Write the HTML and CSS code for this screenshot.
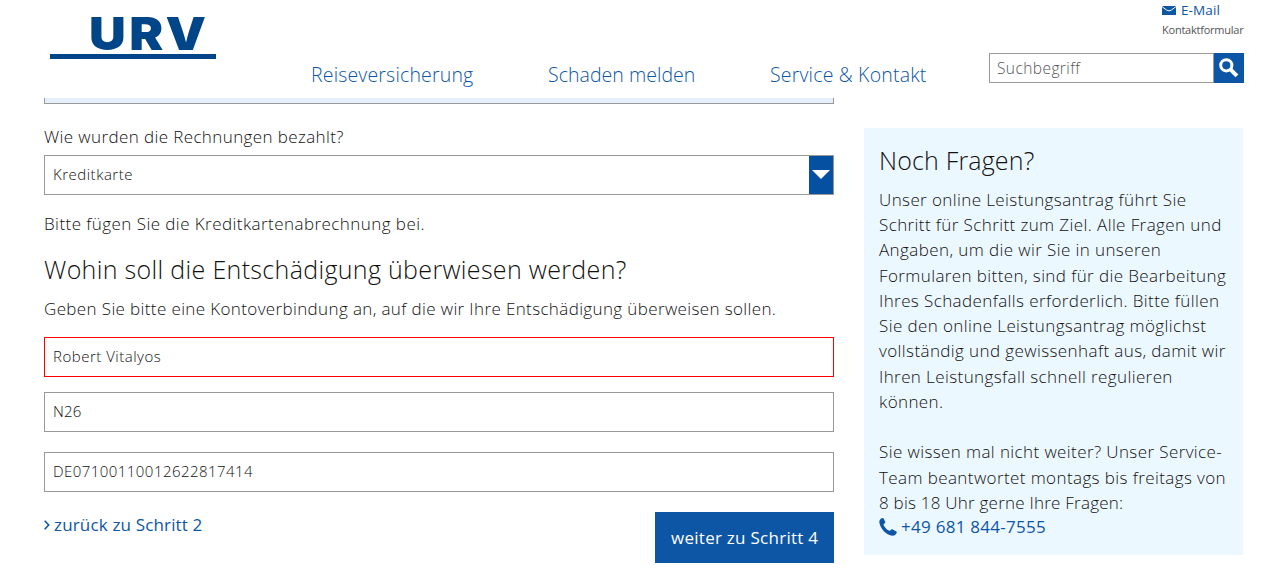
FILE: index.html
```html
<!DOCTYPE html>
<html lang="de">
<head>
<meta charset="utf-8">
<title>URV Leistungsantrag</title>
<link rel="stylesheet" href="styles.css">
</head>
<body>
<header class="header">
  <a class="logo"><span class="logo-text">URV</span></a>
  <nav class="nav">
    <a class="nav-travel">Reiseversicherung</a>
    <a class="nav-claim">Schaden melden</a>
    <a class="nav-service">Service &amp; Kontakt</a>
  </nav>
  <div class="tools">
    <div class="contact">
      <a class="mail"><svg width="14" height="9" viewBox="0 0 14 9"><path fill="#0d56a6" d="M0 0h14v9H0z"/><path d="M0 .6 4.8 4.2Q7 5.6 9.2 4.2L14 .6" fill="none" stroke="#fff" stroke-width="1"/></svg><span class="mail-text">E-Mail</span></a>
      <a class="contact-form">Kontaktformular</a>
    </div>
    <form class="search">
      <div class="search-field"><span>Suchbegriff</span></div>
      <div class="search-button"><svg width="20" height="20" viewBox="0 0 20 20" fill="none" stroke="#fff"><circle cx="7.3" cy="7.3" r="5.6" stroke-width="3"/><path d="m11.7 11.7 6.2 6.2" stroke-width="4"/></svg></div>
    </form>
  </div>
</header>
<div class="page">
  <main class="main">
    <div class="clipped-field"></div>
    <p class="label">Wie wurden die Rechnungen bezahlt?</p>
    <div class="field select"><span>Kreditkarte</span><i class="arrow"><svg width="18" height="9" viewBox="0 0 18 9"><path fill="#fff" d="M0 0h18L9 9z"/></svg></i></div>
    <p class="hint">Bitte fügen Sie die Kreditkartenabrechnung bei.</p>
    <h2 class="heading">Wohin soll die Entschädigung überwiesen werden?</h2>
    <p class="intro">Geben Sie bitte eine Kontoverbindung an, auf die wir Ihre Entschädigung überweisen sollen.</p>
    <div class="field error">Robert Vitalyos</div>
    <div class="field bank">N26</div>
    <div class="field iban">DE07100110012622817414</div>
    <div class="actions">
      <a class="back"><svg width="6" height="10" viewBox="0 0 6 10"><path d="m.7.7 4 4.300-4 4.300" fill="none" stroke="#0d56a6" stroke-width="1.6"/></svg><span>zurück zu Schritt 2</span></a>
      <a class="next">weiter zu Schritt 4</a>
    </div>
  </main>
  <aside class="aside">
    <h3 class="aside-title">Noch Fragen?</h3>
    <p class="aside-text">Unser online Leistungsantrag führt Sie<br>Schritt für Schritt zum Ziel. Alle Fragen und<br>Angaben, um die wir Sie in unseren<br>Formularen bitten, sind für die Bearbeitung<br>Ihres Schadenfalls erforderlich. Bitte füllen<br>Sie den online Leistungsantrag möglichst<br>vollständig und gewissenhaft aus, damit wir<br>Ihren Leistungsfall schnell regulieren<br>können.<br><br>Sie wissen mal nicht weiter? Unser Service-<br>Team beantwortet montags bis freitags von<br><span class="hours">8 bis 18 Uhr gerne Ihre Fragen:</span></p>
    <a class="phone"><svg width="18" height="18" viewBox="0 0 18 18"><path fill="#0d56a6" d="M.3 4.1C.2 2.200 1.600.6 3.500.1c.6-.1.900.1 1.200.6l1.500 3c.3.600.1 1-.3 1.400L4.700 6.200c-.3.400-.2.800 0 1.200 1.400 2.300 2.900 3.900 5.200 5.200.5.300.900.3 1.200-.1l1.200-1c.4-.4.9-.4 1.400-.1l3.600 2.100c.5.300.7.700.4 1.300-.7 1.900-2.200 3-4.100 3C7 17.500.8 10 .3 4.100z"/></svg><span>+49 681 844-7555</span></a>
  </aside>
</div>
</body>
</html>
```
FILE: styles.css
```css
* { box-sizing: border-box; }
body { margin: 0; height: 581px; overflow: hidden; background: #fff; color: #111; font: 300 17px/26px "Open Sans", "Noto Sans", sans-serif; white-space: nowrap; }
p, h2, h3 { margin: 0; font-weight: 300; }
svg { display: block; flex: none; }
.header { display: flex; height: 98px; padding-left: 50px; color: #0d56a6; }
.logo { width: 166px; height: 59px; border-bottom: 5px solid #004587; padding-left: 39px; }
.logo-text { display: block; margin-top: 7px; color: #004587; font: 900 45.5px/53px Inter, sans-serif; letter-spacing: 3px; transform: scaleX(1.12); transform-origin: left; }
.nav { display: flex; width: 773px; padding: 62px 0 0 95px; font-size: 19.5px; }
.nav-travel { width: 237px; letter-spacing: .17px; }
.nav-claim { width: 222px; letter-spacing: .04px; }
.nav-service { letter-spacing: .18px; }
.tools { width: 255px; }
.contact { height: 53px; margin-left: 173px; }
.mail { display: flex; align-items: center; height: 20px; gap: 5px; font-size: 13.5px; font-weight: 400; letter-spacing: .1px; }
.contact-form { display: block; font-size: 11px; line-height: 20px; color: #555; font-weight: 400; letter-spacing: -.23px; }
.search { display: flex; height: 30px; }
.search-field { width: 225px; border: 1px solid #999; padding-left: 7px; line-height: 28px; font-size: 15.5px; color: #555; letter-spacing: .42px; }
.search-button { width: 30px; padding: 5px; background: #0d56a6; }
.page { display: flex; gap: 30px; padding-left: 44px; }
.main { width: 790px; }
.clipped-field { height: 6px; background: #e6f0fd; border: 1px solid #999; border-top: 0; }
.label { height: 51px; padding-top: 20px; letter-spacing: .39px; }
.field { height: 40px; padding-left: 8px; border: 1px solid #999; font-size: 15px; line-height: 37px; letter-spacing: .5px; }
.select { display: flex; justify-content: space-between; }
.arrow { width: 24px; background: #0550a0; padding: 14px 3px; }
.hint { margin-top: 16px; letter-spacing: .44px; }
.heading { margin-top: 15px; font-size: 25px; line-height: 34px; letter-spacing: .33px; }
.intro { margin-top: 10px; height: 41px; letter-spacing: .37px; }
.field.error { border-color: #f00; }
.bank { margin-top: 15px; letter-spacing: .2px; }
.iban { margin-top: 20px; letter-spacing: .45px; }
.actions { display: flex; justify-content: space-between; margin-top: 20px; font-weight: 400; }
.back { display: flex; align-items: center; gap: 4px; height: 26px; color: #0d56a6; letter-spacing: .16px; }
.next { width: 179px; height: 51px; padding-left: 16px; line-height: 51px; background: #0d56a6; color: #fff; letter-spacing: .27px; }
.aside { width: 379px; height: 427px; margin-top: 30px; padding: 13px 0 0 15px; background: #ecf8ff; }
.aside-title { font-size: 25px; line-height: 38px; letter-spacing: .17px; }
.aside-text { margin-top: 8px; line-height: 25.23px; letter-spacing: .4px; }
.hours { letter-spacing: .23px; }
.phone { display: flex; align-items: center; gap: 4px; height: 26px; margin-top: -1px; color: #0d56a6; font-weight: 400; letter-spacing: .27px; }
```
